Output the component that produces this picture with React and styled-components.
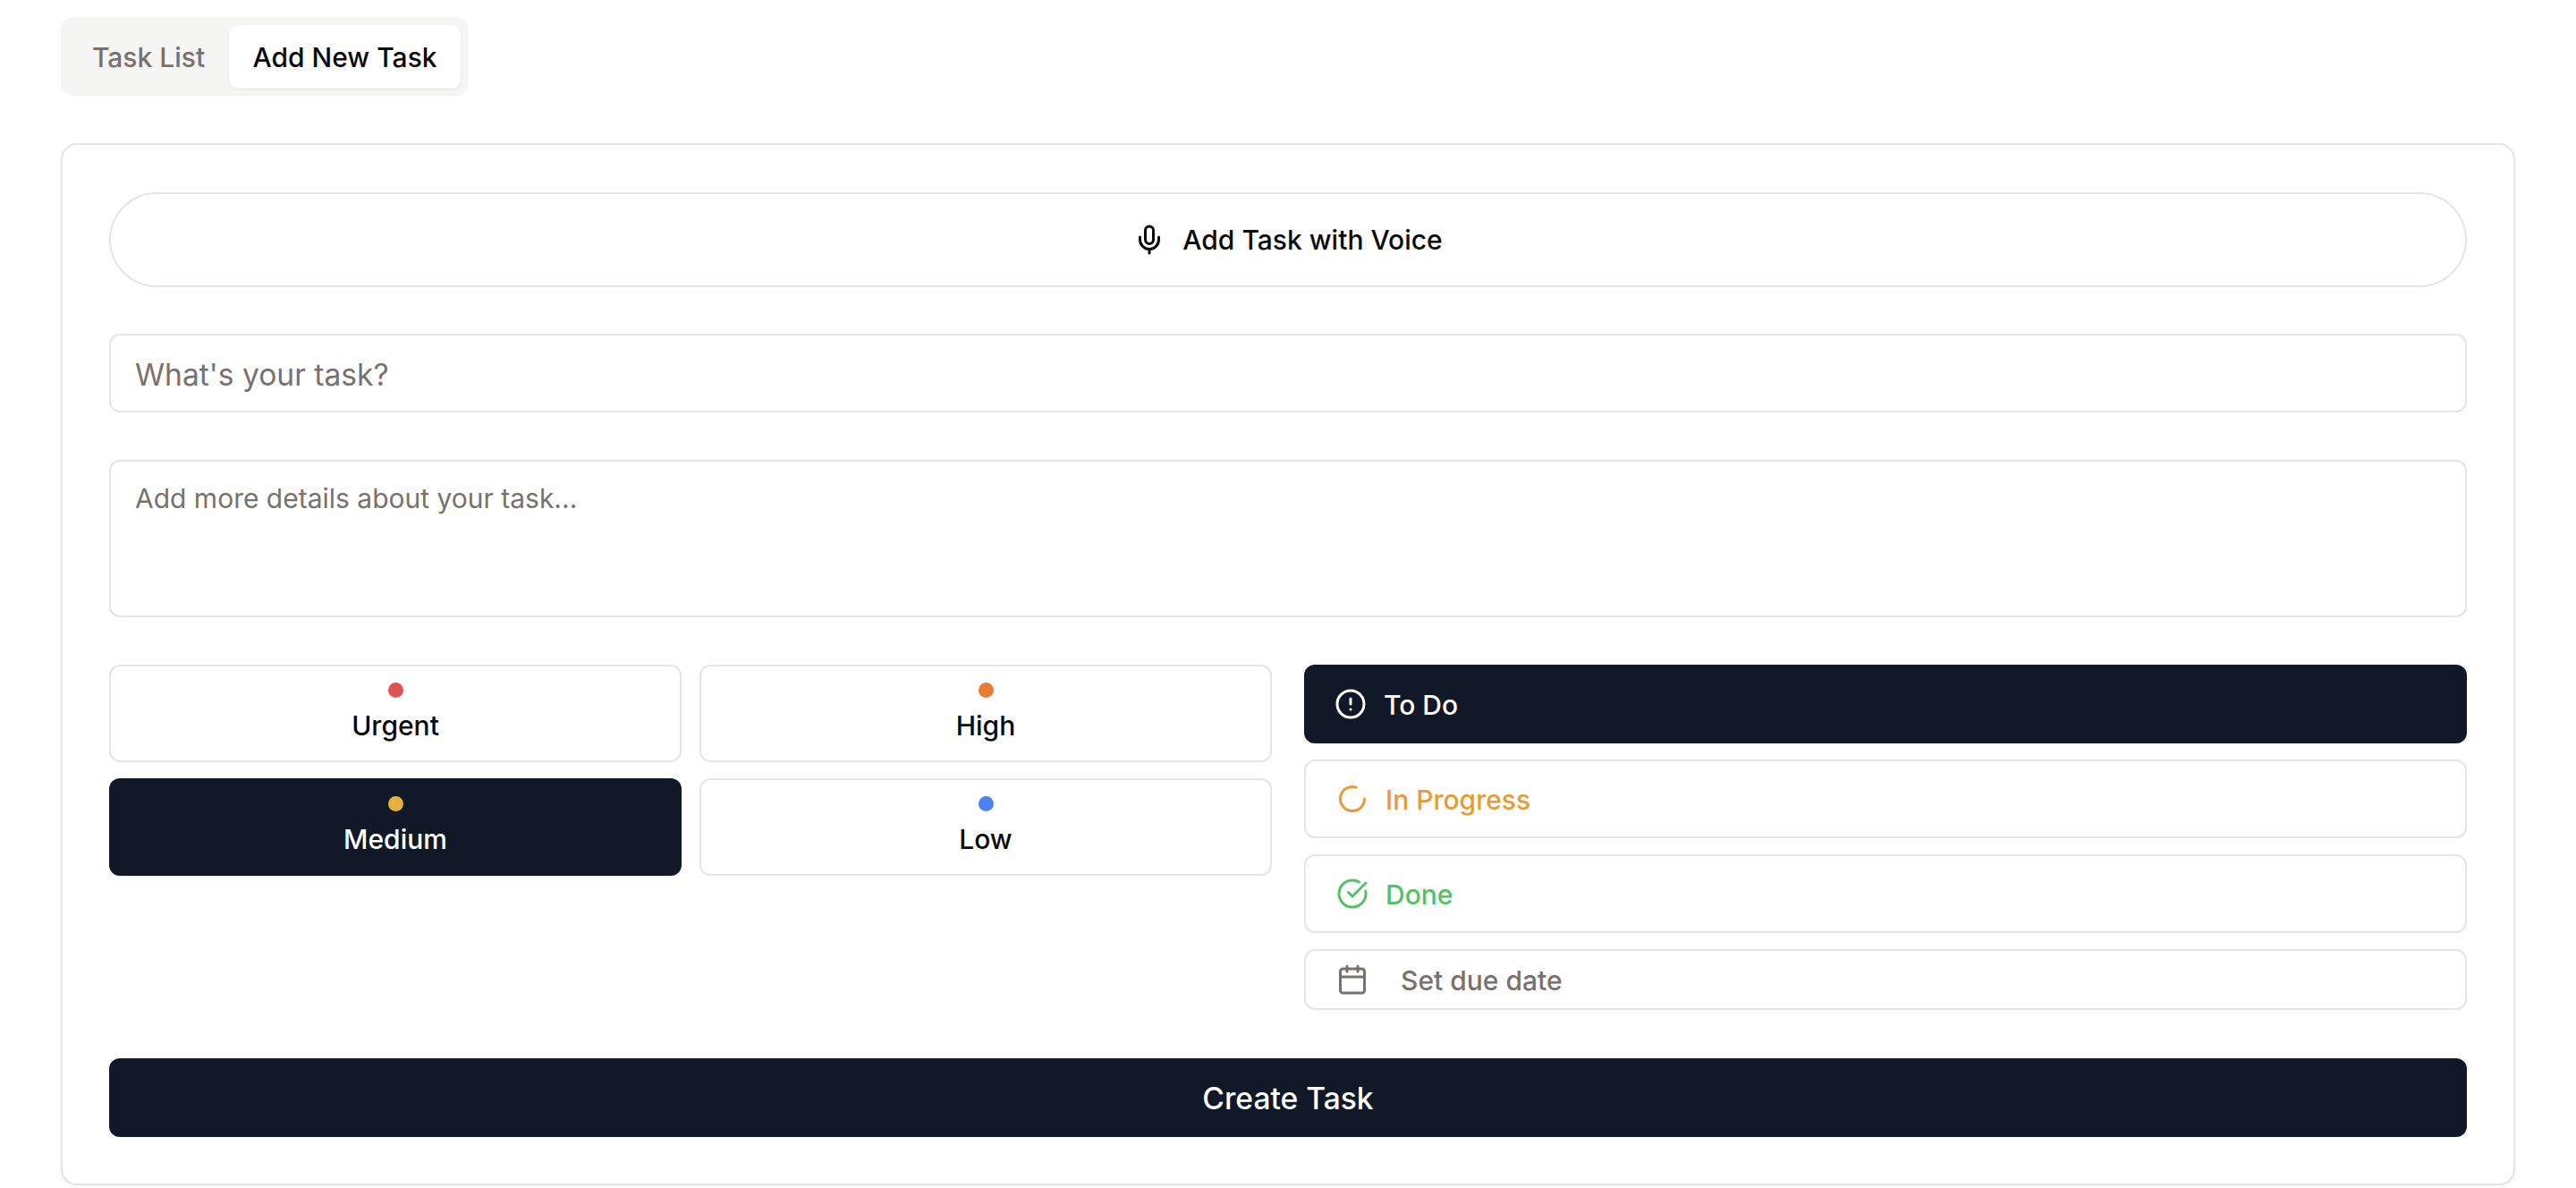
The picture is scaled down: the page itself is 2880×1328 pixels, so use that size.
import React from 'react'
import styled, { createGlobalStyle } from 'styled-components'
import { Mic, CircleAlert, LoaderCircle, CircleCheckBig, Calendar } from 'lucide-react'

const ink = '#111827'
const line = '#e5e5e5'
const muted = '#78716c'

const GlobalStyle = createGlobalStyle`
  * { box-sizing: border-box; }
  html, body { margin: 0; background: #fff; }
  body { font-family: Inter, "Liberation Sans", sans-serif; color: #0a0a0a; overflow: hidden; }
`

const Page = styled.main`
  padding: 19px 68px 0;
  height: 1328px;
`

const Tabs = styled.div`
  display: inline-flex;
  vertical-align: top;
  gap: 0;
  height: 88px;
  padding: 9px 8px 8px;
  background: #f5f5f4;
  border-radius: 14px;
`

const Tab = styled.button`
  height: 71px;
  width: ${props => props.$width}px;
  padding: 0;
  border: 0;
  border-radius: 10px;
  font: 450 30px Inter, sans-serif;
  color: ${props => props.$active ? '#0a0a0a' : muted};
  background: ${props => props.$active ? '#fff' : 'transparent'};
  box-shadow: ${props => props.$active ? '0 1px 3px rgba(0,0,0,.08)' : 'none'};
`

const Card = styled.section`
  display: flex;
  flex-direction: column;
  margin-top: 53px;
  padding: 53px 52px 52px;
  border: 2px solid ${line};
  border-radius: 18px;
  background: #fff;
  box-shadow: 0 2px 4px rgba(0,0,0,.04);
`

const VoiceButton = styled.button`
  display: flex;
  align-items: center;
  justify-content: center;
  gap: 19px;
  height: 106px;
  margin-bottom: 52px;
  border: 2px solid ${line};
  border-radius: 53px;
  background: #fff;
  color: #0a0a0a;
  font: 450 30px Inter, sans-serif;
`

const TitleInput = styled.input`
  display: block;
  width: 100%;
  height: 88px;
  margin-bottom: 53px;
  padding: 2px 27px 0;
  border: 2px solid ${line};
  border-radius: 12px;
  font: 400 33.6px Inter, sans-serif;
  &::placeholder { color: ${muted}; opacity: 1; }
`

const Details = styled.textarea`
  display: block;
  width: 100%;
  height: 176px;
  margin-bottom: 53px;
  padding: 23px 27px;
  border: 2px solid ${line};
  border-radius: 12px;
  resize: none;
  font: 400 30px Inter, sans-serif;
  &::placeholder { color: ${muted}; opacity: 1; }
`

const Options = styled.div`
  display: grid;
  grid-template-columns: 1fr 1fr;
  column-gap: 36px;
  margin-bottom: 54px;
`

const Priorities = styled.div`
  display: grid;
  grid-template-columns: 1fr 1fr;
  grid-auto-rows: 109px;
  gap: 18px 20px;
`

const Priority = styled.button`
  display: flex;
  flex-direction: column;
  align-items: center;
  gap: 11px;
  padding: ${props => props.$active ? '20px 0 0' : '18px 0 0'};
  border: ${props => props.$active ? '0' : `2px solid ${line}`};
  border-radius: 12px;
  background: ${props => props.$active ? ink : '#fff'};
  color: ${props => props.$active ? '#fff' : '#0a0a0a'};
  font: 450 30px/40px Inter, sans-serif;
`

const Dot = styled.span`
  width: 17px;
  height: 17px;
  border-radius: 50%;
  background: ${props => props.$color};
`

const Statuses = styled.div`
  display: flex;
  flex-direction: column;
  gap: 18px;
`

const Status = styled.button`
  display: flex;
  align-items: center;
  gap: 19px;
  height: 88px;
  padding: 0 34px;
  border: ${props => props.$active ? '0' : `2px solid ${line}`};
  border-radius: 12px;
  background: ${props => props.$active ? ink : '#fff'};
  color: ${props => props.$color};
  font: 450 30px Inter, sans-serif;
`

const DueDate = styled.button`
  display: flex;
  align-items: center;
  gap: 36px;
  height: 68px;
  padding: 0 34px;
  border: 2px solid ${line};
  border-radius: 12px;
  background: #fff;
  color: ${muted};
  font: 450 30px Inter, sans-serif;
`

const RowLabel = styled.span`
  padding-top: 2px;
`

const CreateButton = styled.button`
  height: 88px;
  border: 0;
  border-radius: 12px;
  background: ${ink};
  color: #fff;
  font: 450 33.6px Inter, sans-serif;
`

const priorities = [
  { label: 'Urgent', color: '#e05252' },
  { label: 'High', color: '#e97c35' },
  { label: 'Medium', color: '#e3b23c', active: true },
  { label: 'Low', color: '#4f82f0' }
]

const statuses = [
  { label: 'To Do', icon: CircleAlert, color: '#fff', active: true },
  { label: 'In Progress', icon: LoaderCircle, color: '#e89b34' },
  { label: 'Done', icon: CircleCheckBig, color: '#54c164' }
]

export default function App() {
  return (
    <Page>
      <GlobalStyle />
      <Tabs>
        <Tab $width={180}>Task List</Tab>
        <Tab $width={259} $active>Add New Task</Tab>
      </Tabs>
      <Card>
        <VoiceButton><Mic size={36} />Add Task with Voice</VoiceButton>
        <TitleInput placeholder="What's your task?" />
        <Details placeholder="Add more details about your task..." />
        <Options>
          <Priorities>
            {priorities.map(item => (
              <Priority key={item.label} $active={item.active}>
                <Dot $color={item.color} />
                {item.label}
              </Priority>
            ))}
          </Priorities>
          <Statuses>
            {statuses.map(({ label, icon: Icon, color, active }) => (
              <Status key={label} $active={active} $color={color}>
                <Icon size={36} />
                <RowLabel>{label}</RowLabel>
              </Status>
            ))}
            <DueDate><Calendar size={36} /><RowLabel>Set due date</RowLabel></DueDate>
          </Statuses>
        </Options>
        <CreateButton>Create Task</CreateButton>
      </Card>
    </Page>
  )
}
